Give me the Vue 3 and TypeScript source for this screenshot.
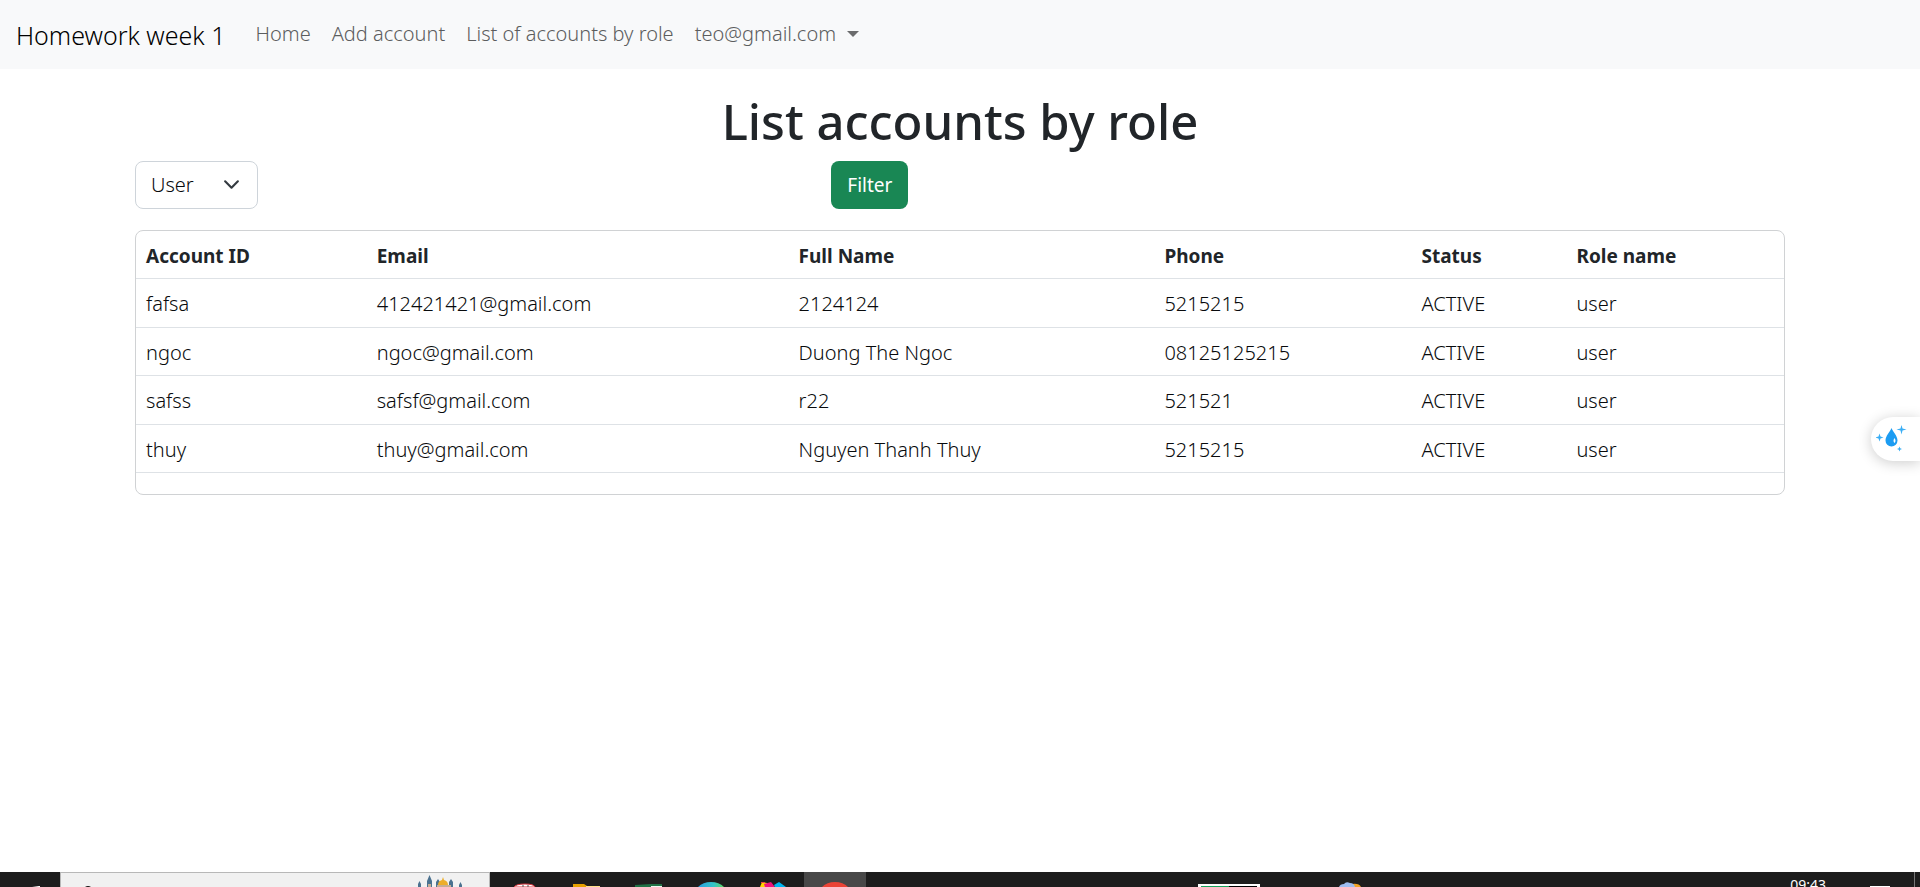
<script setup lang="ts">
import { ref } from 'vue'

interface Account {
  id: string
  email: string
  fullName: string
  phone: string
  status: string
  role: string
}

const links: string[] = ['Home', 'Add account', 'List of accounts by role']
const role = ref<string>('User')
const accounts: Account[] = [
  { id: 'fafsa', email: '412421421@gmail.com', fullName: '2124124', phone: '5215215', status: 'ACTIVE', role: 'user' },
  { id: 'ngoc', email: 'ngoc@gmail.com', fullName: 'Duong The Ngoc', phone: '08125125215', status: 'ACTIVE', role: 'user' },
  { id: 'safss', email: 'safsf@gmail.com', fullName: 'r22', phone: '521521', status: 'ACTIVE', role: 'user' },
  { id: 'thuy', email: 'thuy@gmail.com', fullName: 'Nguyen Thanh Thuy', phone: '5215215', status: 'ACTIVE', role: 'user' },
]
</script>

<template>
  <div class="screen">
    <nav class="navbar">
      <a class="brand" href="#">Homework week 1</a>
      <div class="nav-links">
        <a v-for="link in links" :key="link" class="nav-link" href="#">{{ link }}</a>
        <button class="nav-link user-menu" type="button">teo@gmail.com<span class="caret"></span></button>
      </div>
    </nav>

    <main class="container">
      <h1>List accounts by role</h1>
      <form class="filters" @submit.prevent>
        <div class="role-col">
          <div class="select-wrap">
            <select v-model="role" aria-label="Role">
              <option>User</option>
              <option>Admin</option>
            </select>
            <svg class="chevron" viewBox="0 0 16 16" aria-hidden="true">
              <path d="m2 5 6 6 6-6" fill="none" stroke="#343a40" stroke-width="2" stroke-linecap="round" stroke-linejoin="round" />
            </svg>
          </div>
        </div>
        <button class="filter-btn" type="submit">Filter</button>
      </form>

      <div class="card">
        <table>
          <colgroup>
            <col class="c-id" /><col class="c-email" /><col class="c-name" /><col class="c-phone" /><col class="c-status" /><col />
          </colgroup>
          <thead>
            <tr>
              <th>Account ID</th>
              <th>Email</th>
              <th>Full Name</th>
              <th>Phone</th>
              <th>Status</th>
              <th>Role name</th>
            </tr>
          </thead>
          <tbody>
            <tr v-for="a in accounts" :key="a.id">
              <td>{{ a.id }}</td>
              <td>{{ a.email }}</td>
              <td>{{ a.fullName }}</td>
              <td>{{ a.phone }}</td>
              <td>{{ a.status }}</td>
              <td>{{ a.role }}</td>
            </tr>
          </tbody>
        </table>
      </div>
    </main>

    <button class="drop-widget" type="button" aria-label="Assistant">
      <svg width="32" height="28" viewBox="0 0 32 28">
        <path d="M15.500 3C17 7 21.500 11 21.500 15.500a6 6 0 0 1-12 0C9.500 11 14 7 15.500 3z" fill="#1c9cf2" />
        <path d="M18.500 13q2 3 0 5-2-2 0-5z" fill="#fff" />
        <path d="M25.500 0l1 3.500 4 1-4 1-1 4-1-4-4-1 4-1zM3.500 8.500l1 3 3 1-3 1-1 3-1-3-3-1 3-1zM23.500 21.500l.7 1.800 1.800.7-1.800.7-.7 1.800-.7-1.800-1.800-.7 1.800-.7z" fill="#3aaef5" />
      </svg>
    </button>

    <footer class="taskbar">
      <span class="start"><svg width="60" height="15"><path d="M32 15l7-1h1v1z" fill="#fff" /></svg></span>
      <span class="search">
        <svg width="30" height="14"><path d="M4 14q3-2 6 0z" fill="#111" /></svg>
        <svg width="52" height="14" viewBox="0 0 52 14">
          <path d="M3 14v-3l1.500-3L6 11v3zM12 14V8l2.500-6L17 8v6zM21 14V9l2-3 2 3v5zM34 14V9l2-3 2 3v5zM44 14v-2l1.500-3 1.500 3v2z" fill="#4b7290" />
          <path d="M13 11h3v3h-3zM22 12h14v2H22z" fill="#c7ad94" />
          <path d="M23 12q0-4 4-5l1-3 1 3q4 1 4 5z" fill="#edae2b" />
        </svg>
      </span>
      <span class="apps">
        <span class="app"><svg width="28" height="4"><path d="M3 4Q5 1 14 1t10 3z" fill="#fff" stroke="#d9363e" stroke-width="1" /><path d="M11 3h2M16 3h2" stroke="#555" /></svg></span>
        <span class="app"><svg width="28" height="3"><path d="M0 0h11l3 2h-1v1H0z" fill="#e6a100" /><path d="M13 2h14v1H13z" fill="#ffe08a" /></svg></span>
        <span class="app"><svg width="28" height="3"><path d="M0 1l16-1v3H0z" fill="#1f7145" /><path d="M16 0h11v2H16z" fill="#1f7145" /><path d="M16 2h11v1H16z" fill="#eef5f0" /></svg></span>
        <span class="app"><svg width="28" height="5"><defs><linearGradient id="wave"><stop offset="0" stop-color="#269fe0" /><stop offset=".6" stop-color="#35c5c8" /><stop offset="1" stop-color="#5bd860" /></linearGradient></defs><path d="M1 5Q6 0 14 0t13 5z" fill="url(#wave)" /></svg></span>
        <span class="app"><svg width="28" height="5"><path d="M1 5l2-5 5 1 2 4z" fill="#ffd400" /><path d="M5 2l7-2 4 5H6z" fill="#f0127c" /><path d="M15 3l5-3 7 5H16z" fill="#00b4ef" /><path d="M2 0h4v1H2z" fill="#e84b3a" /></svg></span>
        <span class="app active"><svg width="28" height="5"><path d="M1 5Q6 0 14 0t13 5z" fill="#ea4335" /></svg></span>
      </span>
      <span class="tray">
        <svg width="62" height="3"><path d="M0 0h62v3H0z" fill="#fff" /><path d="M3 2h28v1H3z" fill="#16a45c" /><path d="M31 2h28v1H31z" fill="#000" /></svg>
        <svg width="28" height="5"><path d="M14 2q7-1 9 3h-8z" fill="#f2a324" /><path d="M1 5q1-3 5-3 2-3 6-1 4 0 5 4z" fill="#9dbcf0" /></svg>
      </span>
      <span class="clock">09:43</span>
      <svg class="notice" width="50" height="15"><path d="M0 14h20v1H0z" fill="#fff" /><path d="M44 0h1v15h-1z" fill="#777" /></svg>
    </footer>
  </div>
</template>

<style>
body {
  margin: 0;
  background: #fff;
}
</style>

<style scoped>
* {
  box-sizing: border-box;
}
.screen {
  position: relative;
  display: flex;
  flex-direction: column;
  min-height: 100vh;
  color: #212529;
  font-family: "Segoe UI", "Noto Sans", "Open Sans", sans-serif;
  font-size: 20px;
  font-weight: 300;
  line-height: 30px;
}
button,
select {
  font: inherit;
}
.navbar {
  display: flex;
  align-items: center;
  padding: 0 16px;
  min-height: 69px;
  background: #f8f9fa;
}
.brand {
  margin-right: 20px;
  color: #000;
  font-size: 25px;
  line-height: 38px;
  text-decoration: none;
}
.nav-links {
  display: flex;
  padding-bottom: 2px;
}
.nav-link {
  padding: 0 10px;
  border: 0;
  background: none;
  color: #5c5d5e;
  text-decoration: none;
}
.nav-link + .nav-link {
  margin-left: 1px;
}
.user-menu {
  display: flex;
  align-items: center;
}
.caret {
  margin-left: 11px;
  border-top: 6px solid #6b6c6d;
  border-right: 6px solid transparent;
  border-left: 6px solid transparent;
}
.container {
  flex: 1;
  width: 86%;
  max-width: 1650px;
  margin: 0 auto;
  padding-top: 22px;
}
h1 {
  margin: 0 0 10px;
  font-size: 49px;
  font-weight: 500;
  line-height: 60px;
  text-align: center;
}
.filters {
  display: flex;
  margin-bottom: 21px;
}
.role-col {
  width: 42.2%;
}
.select-wrap {
  position: relative;
  width: 123px;
}
select {
  display: block;
  width: 100%;
  height: 48px;
  padding: 0 15px;
  border: 1px solid #ced4da;
  border-radius: 8px;
  background: #fff;
  color: #080a0c;
  appearance: none;
}
.chevron {
  position: absolute;
  top: 15px;
  right: 18px;
  width: 17px;
  height: 17px;
  pointer-events: none;
}
.filter-btn {
  height: 48px;
  padding: 0 16px;
  border: 0;
  border-radius: 8px;
  background: #198754;
  color: #fff;
  font-weight: 400;
  font-size: 19px;
}
.card {
  padding-bottom: 21px;
  border: 1px solid #d0d2d4;
  border-radius: 8px;
}
table {
  width: 100%;
  border-collapse: separate;
  border-spacing: 0;
  table-layout: fixed;
}
th,
td {
  height: 48px;
  padding: 2px 10px 0;
  border-bottom: 1px solid #dee2e6;
  text-align: left;
}
td {
  color: #080a0c;
}
tbody tr:nth-child(odd) td {
  height: 49px;
}
th {
  font-size: 19px;
  font-weight: 700;
}
.c-id { width: 14%; }
.c-email { width: 25.6%; }
.c-name { width: 22.2%; }
.c-phone { width: 15.6%; }
.c-status { width: 9.4%; }
.drop-widget {
  position: absolute;
  top: 417px;
  right: 0;
  display: flex;
  align-items: center;
  width: 49px;
  height: 44px;
  padding: 0 0 0 5px;
  border: 0;
  border-radius: 22px 0 0 22px;
  background: #fff;
  box-shadow: 0 2px 14px rgba(0, 0, 0, 0.2);
}
.taskbar {
  display: flex;
  height: 15px;
  overflow: hidden;
  background: #1d1d1d;
}
.taskbar svg {
  display: block;
  flex: none;
}
.start {
  width: 60px;
}
.search {
  display: flex;
  justify-content: space-between;
  width: 430px;
  padding: 0 22px 0 20px;
  border: 1px solid #b8b8b8;
  border-bottom: 0;
  background: #f1f1f1;
}
.apps {
  display: flex;
  padding-left: 4px;
}
.app {
  display: flex;
  align-items: flex-end;
  justify-content: center;
  width: 62px;
}
.active {
  background: #484848;
}
.tray {
  display: flex;
  align-items: flex-end;
  gap: 78px;
  margin-left: auto;
  margin-right: 424px;
}
.clock {
  margin-right: 44px;
  color: #fff;
  font-size: 14px;
  font-weight: 400;
  line-height: 26px;
}
</style>
